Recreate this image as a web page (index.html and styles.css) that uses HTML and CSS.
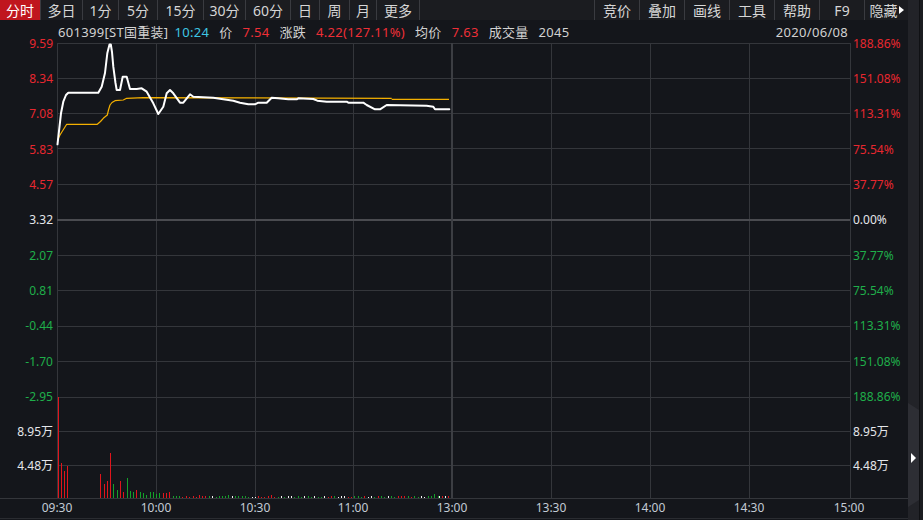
FILE: index.html
```html
<!DOCTYPE html>
<html lang="zh-CN">
<head>
<meta charset="utf-8">
<title>分时 - 601399</title>
<link rel="stylesheet" href="styles.css">
</head>
<body>
<div class="app">
  <div class="main">
    <header class="toolbar">
      <nav class="tabs">
        <span class="tab active w41">分时</span>
        <span class="tab w42">多日</span>
        <span class="tab w36">1分</span>
        <span class="tab w39">5分</span>
        <span class="tab w46">15分</span>
        <span class="tab w42">30分</span>
        <span class="tab w45">60分</span>
        <span class="tab w29">日</span>
        <span class="tab w30">周</span>
        <span class="tab w27">月</span>
        <span class="tab w43">更多</span>
      </nav>
      <nav class="tabs tabs-right">
        <span class="tab">竞价</span>
        <span class="tab">叠加</span>
        <span class="tab">画线</span>
        <span class="tab">工具</span>
        <span class="tab">帮助</span>
        <span class="tab">F9</span>
        <span class="tab">隐藏<svg class="caret" width="5" height="8" viewBox="0 0 5 8"><path d="M0 0L5 4L0 8Z"/></svg></span>
      </nav>
    </header>
    <section class="chart">
      <div class="info">
        <span class="code">601399[ST国重装]</span>
        <span class="cyan">10:24</span>
        <span>价</span>
        <span class="up">7.54</span>
        <span>涨跌</span>
        <span class="up">4.22(127.11%)</span>
        <span>均价</span>
        <span class="up">7.63</span>
        <span>成交量</span>
        <span>2045</span>
        <span class="date">2020/06/08</span>
      </div>
      <svg class="plot" width="908" height="477" viewBox="0 0 908 477">
        <path class="grid" d="M57 0.5H850M57 35.5H850M57 70.5H850M57 105.5H850M57 141.5H850M57 212.5H850M57 247.5H850M57 283.5H850M57 318.5H850M57 354.5H850M57 388.5H850M57 422.5H850M0 455.5H908"/>
        <path class="grid" d="M57.5 0V455M156.5 0V455M255.5 0V455M353.5 0V455M551.5 0V455M650.5 0V455M749.5 0V455M850.5 0V455"/>
        <rect class="mid" x="57" y="176" width="793" height="2"/>
        <rect class="noon" x="451" y="0" width="2" height="455"/>
        <path class="bottomline" d="M0 475.5H908"/>

        <path class="vol-red" d="M58.5 455V354M61.5 455V420M64.5 455V428M67.5 455V423M100.5 455V431M104.5 455V441M107.5 455V438M110.5 455V410M120.5 455V438M123.5 455V449M136.5 455V447M163.5 455V450M166.5 455V450M169.5 455V449M182.5 455V454M186.5 455V453M189.5 455V454M193.5 455V453M196.5 455V454M199.5 455V452M202.5 455V453M205.5 455V453M258.5 455V453M261.5 455V454M264.5 455V454M268.5 455V453M271.5 455V452M274.5 455V454M328.5 455V454M331.5 455V453M348.5 455V454M351.5 455V454M364.5 455V453M378.5 455V453M398.5 455V453M401.5 455V453M404.5 455V453M411.5 455V454M442.5 455V453M448.5 455V453"/>
        <path class="vol-green" d="M113.5 455V441M117.5 455V447M127.5 455V435M130.5 455V448M133.5 455V449M140.5 455V449M143.5 455V450M146.5 455V452M150.5 455V449M153.5 455V449M156.5 455V451M159.5 455V450M173.5 455V453M176.5 455V453M179.5 455V453M209.5 455V453M216.5 455V454M219.5 455V453M222.5 455V453M225.5 455V453M228.5 455V452M235.5 455V453M238.5 455V453M242.5 455V453M245.5 455V453M248.5 455V454M278.5 455V454M284.5 455V454M294.5 455V454M298.5 455V453M301.5 455V454M308.5 455V453M311.5 455V454M318.5 455V454M321.5 455V454M334.5 455V453M354.5 455V453M358.5 455V453M361.5 455V454M374.5 455V454M381.5 455V453M384.5 455V454M391.5 455V453M394.5 455V454M408.5 455V453M414.5 455V453M418.5 455V454M428.5 455V453M431.5 455V453M434.5 455V451M438.5 455V453"/>
        <path class="vol-white" d="M212.5 455V453M232.5 455V453M252.5 455V454M255.5 455V454M281.5 455V453M288.5 455V453M291.5 455V453M304.5 455V453M314.5 455V453M324.5 455V453M338.5 455V454M341.5 455V453M344.5 455V453M368.5 455V454M371.5 455V453M388.5 455V453M421.5 455V453M424.5 455V454M439.5 455V453M445.5 455V453"/>

        <path class="avg" d="M57.5 97L60 92L66.7 81.3L97.3 81.3L100.5 78.5L103.3 75.3L107.3 72L108.5 67L110 62L112 59.5L115 57.7L123.3 57L126.7 55.3L143.3 54.7L391.7 55.3M391.7 56.3L449 56.3"/>
        <path class="price" d="M57.5 101.3L59.3 85.3L61 70.3L63.3 58.7L66 52L68.3 49.7L98.3 49.7L101.7 43.7L105 30L107.3 10.3L109.5 1.5L110.8 1.5L112 9L113.3 23.7L115.5 40L116.7 47L120 47L122.7 33.7L126.7 33.7L130 46L136.7 46L141.7 45.3L146.7 48.7L153.3 60.3L158.3 71L163.3 63.7L166.7 50.3L170 47L173.3 50.3L180 59.7L183.3 59.7L190 51.3L193.3 53.7L213.3 54.7L233.3 57.7L240 59.7L248.3 61.3L255 61.3L258.3 59.7L266.7 59.7L271.7 54.7L278.3 55.3L288.3 56.3L296.7 56.3L298.3 55.3L313.3 56L317.3 57.7L326.7 58.7L346.7 58.7L348.3 59.7L363.3 59.7L366.7 62L375 66.3L380 66.3L386.7 62L426.7 62.7L433.3 63.7L435 66.3L449.3 66.3"/>

        <g class="ax ax-left">
          <text class="red" x="53" y="4.5">9.59</text>
          <text class="red" x="53" y="39.8">8.34</text>
          <text class="red" x="53" y="75.2">7.08</text>
          <text class="red" x="53" y="110.5">5.83</text>
          <text class="red" x="53" y="145.9">4.57</text>
          <text class="white" x="53" y="181.2">3.32</text>
          <text class="green" x="53" y="216.6">2.07</text>
          <text class="green" x="53" y="252">0.81</text>
          <text class="green" x="53" y="287.3">-0.44</text>
          <text class="green" x="53" y="322.7">-1.70</text>
          <text class="green" x="53" y="358">-2.95</text>
          <text class="white" x="53" y="392.6">8.95万</text>
          <text class="white" x="53" y="426.8">4.48万</text>
        </g>
        <g class="ax ax-right">
          <text class="red" x="853" y="4.5">188.86%</text>
          <text class="red" x="853" y="39.8">151.08%</text>
          <text class="red" x="853" y="75.2">113.31%</text>
          <text class="red" x="853" y="110.5">75.54%</text>
          <text class="red" x="853" y="145.9">37.77%</text>
          <text class="white" x="853" y="181.2">0.00%</text>
          <text class="green" x="853" y="216.6">37.77%</text>
          <text class="green" x="853" y="252">75.54%</text>
          <text class="green" x="853" y="287.3">113.31%</text>
          <text class="green" x="853" y="322.7">151.08%</text>
          <text class="green" x="853" y="358">188.86%</text>
          <text class="white" x="853" y="392.6">8.95万</text>
          <text class="white" x="853" y="426.8">4.48万</text>
        </g>
        <g class="ax ax-time">
          <text x="57" y="469">09:30</text>
          <text x="156" y="469">10:00</text>
          <text x="255" y="469">10:30</text>
          <text x="353" y="469">11:00</text>
          <text x="452" y="469">13:00</text>
          <text x="551" y="469">13:30</text>
          <text x="650" y="469">14:00</text>
          <text x="749" y="469">14:30</text>
          <text x="849" y="469">15:00</text>
        </g>
      </svg>
    </section>
  </div>
  <aside class="side">
    <div class="rail">
      <svg class="collapse" width="11" height="104" viewBox="0 0 11 104">
        <path class="collapse-bg" d="M0 0L11 7V97L0 104Z"/>
        <path class="collapse-arrow" d="M3 50L8 55L3 60Z"/>
      </svg>
    </div>
    <div class="edge"></div>
  </aside>
</div>
</body>
</html>
```

FILE: styles.css
```css
* {
  box-sizing: border-box;
}

html,
body {
  margin: 0;
  padding: 0;
  background: #14161b;
}

body {
  width: 923px;
  height: 520px;
  overflow: hidden;
  font-family: "Noto Sans", "Noto Sans CJK SC", sans-serif;
  color: #d2d2d2;
}

.app {
  display: flex;
  width: 923px;
  height: 520px;
}

.main {
  width: 908px;
  display: flex;
  flex-direction: column;
  background: #14161b;
}

/* ---------- toolbar ---------- */
.toolbar {
  height: 20px;
  display: flex;
  justify-content: space-between;
  background: #1b1c20;
  font-size: 14px;
  color: #d6d6d6;
}

.tabs {
  display: flex;
}

.tab {
  display: flex;
  align-items: center;
  justify-content: center;
  height: 20px;
  border-right: 1px solid #3a3b40;
  white-space: nowrap;
}

.tab.active {
  background: #c0161e;
  color: #ffffff;
}

.w27 { width: 27px; }
.w29 { width: 29px; }
.w30 { width: 30px; }
.w36 { width: 36px; }
.w39 { width: 39px; }
.w41 { width: 41px; }
.w42 { width: 42px; }
.w43 { width: 43px; }
.w45 { width: 45px; }
.w46 { width: 46px; }

.tabs-right .tab {
  width: 45px;
  border-right: 0;
  border-left: 1px solid #3a3b40;
}

.tabs-right .tab:last-child {
  width: 44px;
}

.caret {
  margin-left: 1px;
  fill: #ffffff;
}

/* ---------- info bar ---------- */
.chart {
  display: flex;
  flex-direction: column;
  height: 500px;
}

.info {
  height: 23px;
  display: flex;
  align-items: center;
  gap: 10px;
  padding: 0 60px 0 58px;
  font-size: 13px;
  letter-spacing: 0.3px;
  color: #d2d2d2;
  white-space: nowrap;
}

.info .code {
  margin-right: -4px;
}

.info .cyan {
  color: #3ec6e4;
}

.info .up {
  color: #ef2f37;
}

.info .date {
  margin-left: auto;
}

/* ---------- plot ---------- */
.plot {
  display: block;
  overflow: visible;
}

.grid {
  fill: none;
  stroke: #34363b;
  stroke-width: 1;
  shape-rendering: crispEdges;
}

.mid {
  fill: #4a4b50;
  shape-rendering: crispEdges;
}

.noon {
  fill: #3c3e43;
  shape-rendering: crispEdges;
}

.bottomline {
  stroke: #2a2c31;
  stroke-width: 1;
  shape-rendering: crispEdges;
}

.vol-red,
.vol-green,
.vol-white {
  fill: none;
  stroke-width: 1;
  shape-rendering: crispEdges;
}

.vol-red {
  stroke: #e0151c;
}

.vol-green {
  stroke: #14a02a;
}

.vol-white {
  stroke: #f2f2f2;
}

.avg {
  fill: none;
  stroke: #f4b000;
  stroke-width: 1.2;
  stroke-linejoin: round;
}

.price {
  fill: none;
  stroke: #ffffff;
  stroke-width: 2;
  stroke-linejoin: round;
  stroke-linecap: round;
}

.ax {
  font-family: "Noto Sans", "Noto Sans CJK SC", sans-serif;
  font-size: 12px;
}

.ax-left {
  text-anchor: end;
}

.ax-right {
  text-anchor: start;
}

.ax .red {
  fill: #e8272f;
}

.ax .green {
  fill: #1fae4a;
}

.ax .white {
  fill: #e4e6ea;
}

.ax-time {
  text-anchor: middle;
  fill: #c3cbd5;
}

/* ---------- side strip ---------- */
.side {
  width: 15px;
  display: flex;
}

.rail {
  width: 11px;
  display: flex;
  flex-direction: column;
  background: #222328;
}

.collapse {
  display: block;
  margin-top: 403px;
}

.collapse-bg {
  fill: #2d2e34;
}

.collapse-arrow {
  fill: #ffffff;
}

.edge {
  width: 4px;
  background: #1b1c20;
  border-left: 1px solid #101114;
}
```
